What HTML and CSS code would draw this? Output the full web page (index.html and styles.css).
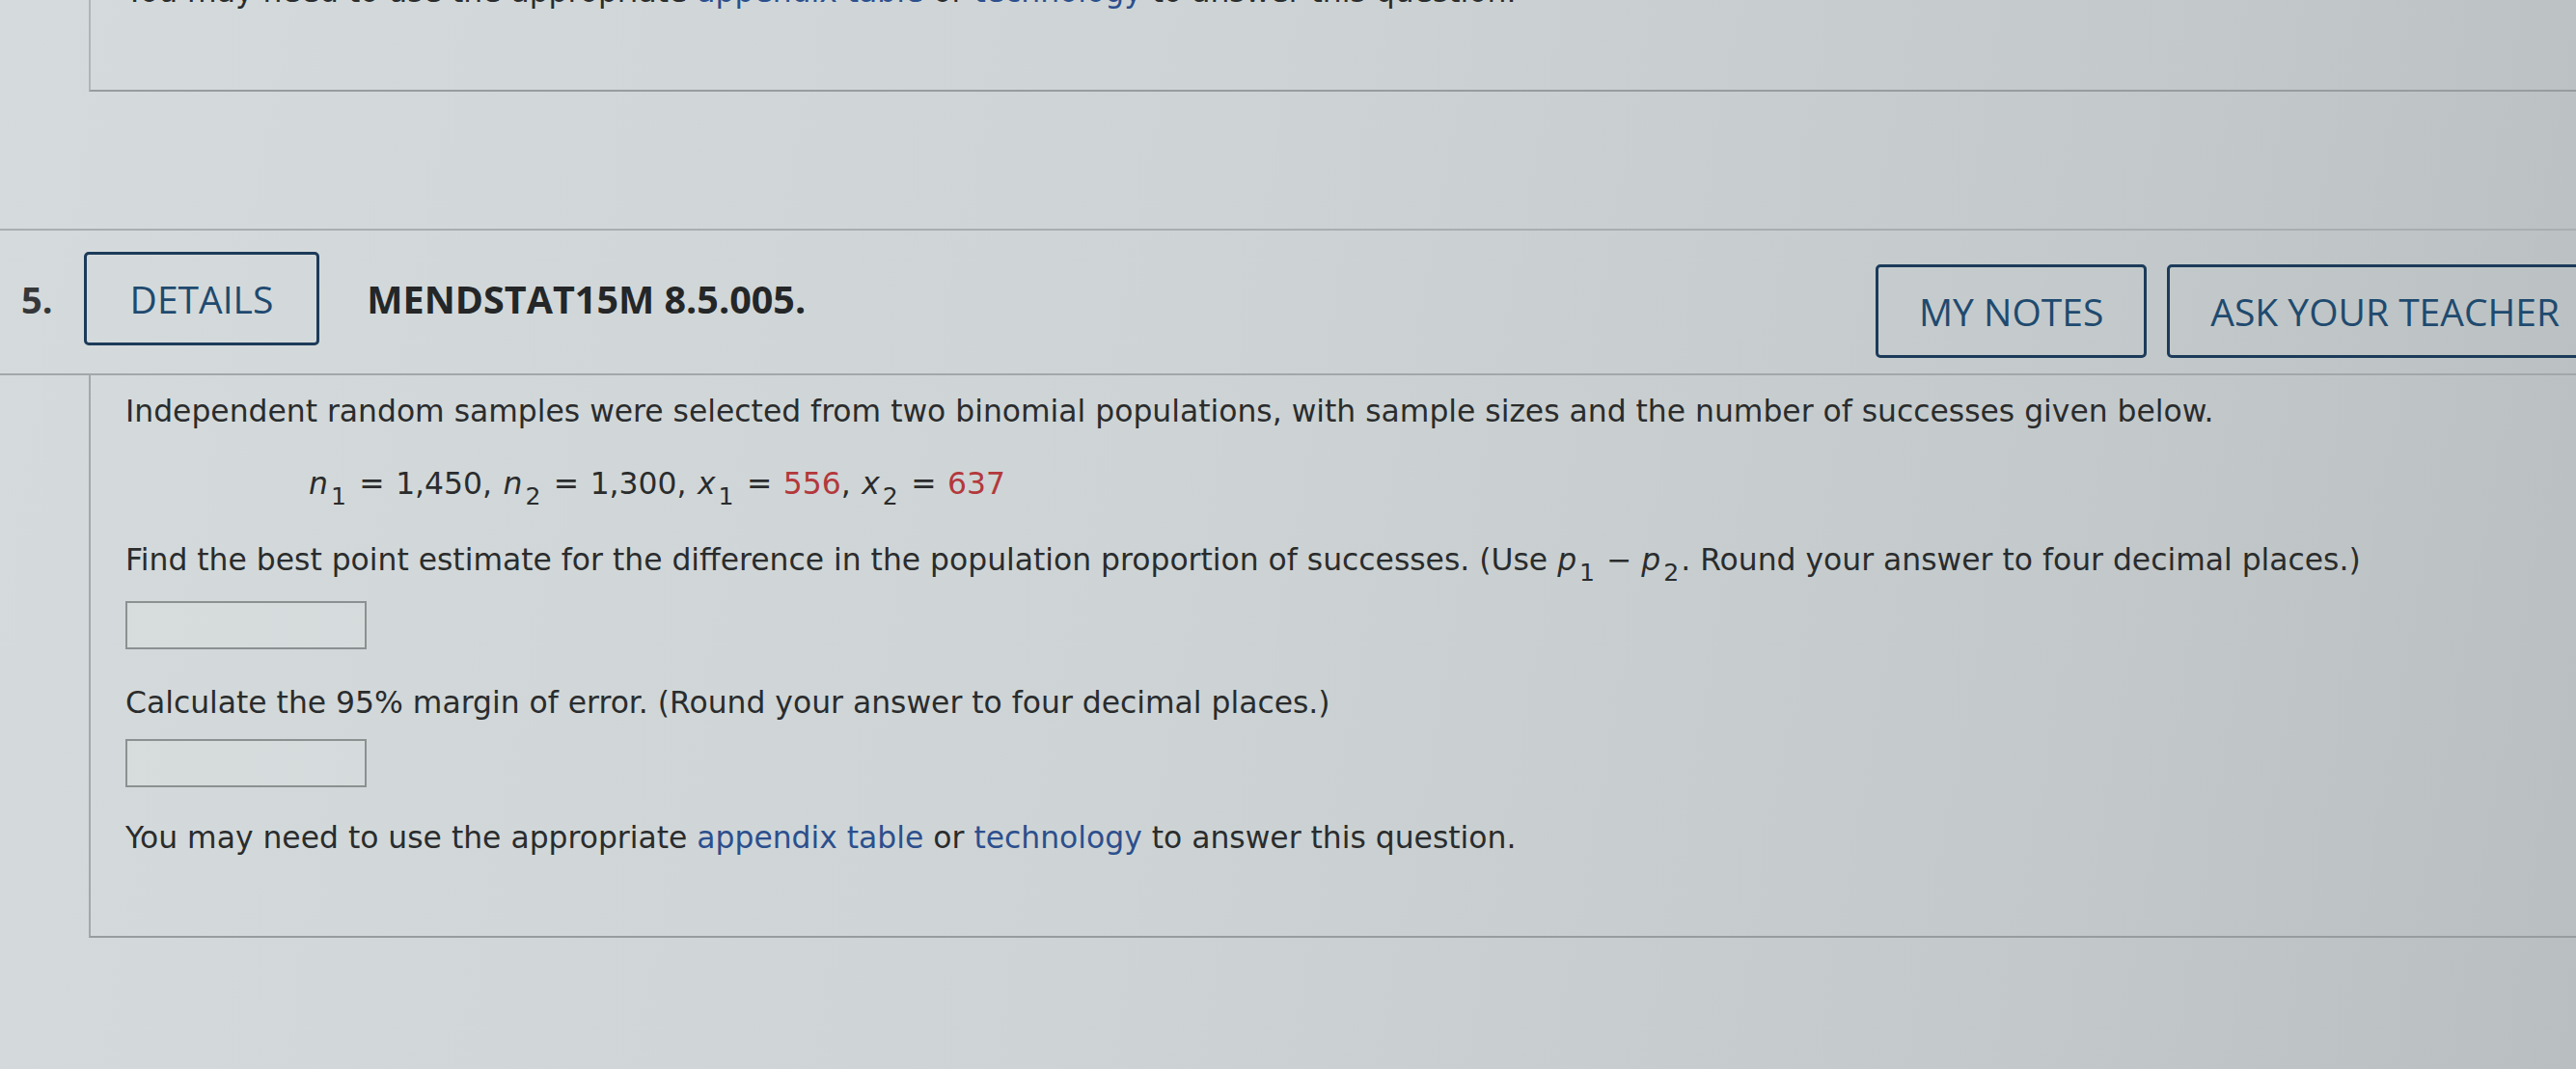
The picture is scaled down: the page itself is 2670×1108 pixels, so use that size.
FILE: index.html
```html
<!DOCTYPE html>
<html>
<head>
    <title>Assignment</title>
    <meta charset="utf-8" />
    <link rel="stylesheet" href="styles.css">
</head>
<body>
    <div class="page">

        <div class="qbody qbody-prev">
            <p class="qline">You may need to use the appropriate <a class="ref-link" href="#">appendix table</a> or <a class="ref-link" href="#">technology</a> to answer this question.</p>
        </div>

        <div class="question">
            <div class="qhead">
                <div class="qhead-left">
                    <span class="qnum">5.</span>
                    <button class="outline-button details-button">DETAILS</button>
                    <span class="qid">MENDSTAT15M 8.5.005.</span>
                </div>
                <div class="qtools">
                    <button class="outline-button">MY NOTES</button>
                    <button class="outline-button">ASK YOUR TEACHER</button>
                </div>
            </div>

            <div class="qbody">
                <p class="qline">Independent random samples were selected from two binomial populations, with sample sizes and the number of successes given below.</p>

                <p class="qline formula">
                    <i>n</i><sub>1</sub> = 1,450, <i>n</i><sub>2</sub> = 1,300, <i>x</i><sub>1</sub> = <span class="given">556</span>, <i>x</i><sub>2</sub> = <span class="given">637</span>
                </p>

                <p class="qline gap-find">Find the best point estimate for the difference in the population proportion of successes. (Use <i>p</i><sub>1</sub> &minus; <i>p</i><sub>2</sub>. Round your answer to four decimal places.)</p>
                <input class="answer-box answer-first" type="text">

                <p class="qline gap-calc">Calculate the 95% margin of error. (Round your answer to four decimal places.)</p>
                <input class="answer-box answer-second" type="text">

                <p class="qline gap-note">You may need to use the appropriate <a class="ref-link" href="#">appendix table</a> or <a class="ref-link" href="#">technology</a> to answer this question.</p>
            </div>
        </div>

    </div>
</body>
</html>
```

FILE: styles.css
```css
html, body {
    margin: 0;
    height: 100%;
    overflow: hidden;
    background: linear-gradient(100deg, #d5dbdc 0%, #ced4d5 45%, #c3c9ca 80%, #b9bfc0 100%);
    color: #2a2c2d;
    font-family: "DejaVu Sans", Verdana, sans-serif;
}

.page {
    width: 2700px;
}

/* question body: text, formula, answer boxes */
.qbody {
    margin-left: 92px;
    padding: 17px 0 82px 36px;
    border-left: 2px solid #a3a9aa;
    border-bottom: 2px solid #979d9e;
}

.qbody-prev {
    margin-top: -29px;
    padding-top: 0;
    border-left-color: #b0b6b7;
}

.qline {
    margin: 0;
    font-size: 31.4px;
    line-height: 40px;
    white-space: nowrap;
}

.qline i {
    font-style: italic;
}

.qline sub {
    font-size: 0.8em;
    line-height: 0;
    vertical-align: -0.42em;
    margin: 0 2px 0 3px;
}

.formula {
    margin: 35px 0 0 190px;
    word-spacing: 1.5px;
}

.given {
    color: #b3383b;
}

.gap-find {
    margin-top: 39px;
}

.gap-calc {
    margin-top: 35px;
}

.gap-note {
    margin-top: 32px;
}

.ref-link {
    color: #2c4f8d;
    text-decoration: none;
}

.answer-box {
    display: block;
    box-sizing: border-box;
    width: 250px;
    height: 50px;
    margin: 0;
    border: 2px solid #8b9091;
    background-color: rgba(255, 255, 255, 0.08);
}

.answer-first {
    margin-top: 23px;
}

.answer-second {
    margin-top: 18px;
}

/* question header bar */
.question {
    margin-top: 142px;
}

.qhead {
    display: flex;
    align-items: flex-start;
    padding: 22px 2px 16px 22px;
    border-top: 2px solid #a9afb0;
    border-bottom: 2px solid #a2a8a9;
    font-family: "Open Sans", "Liberation Sans", sans-serif;
}

.qhead-left {
    display: flex;
    align-items: center;
}

.qnum {
    font-size: 38px;
    font-weight: 700;
    color: #353738;
    margin-right: 32px;
}

.qid {
    font-size: 39.5px;
    font-weight: 700;
    color: #242627;
    margin-left: 49px;
}

.qtools {
    display: flex;
    gap: 21px;
    margin-left: auto;
    margin-top: 13px;
}

.outline-button {
    box-sizing: border-box;
    height: 97px;
    padding: 0 42px;
    border: 3px solid #1c3b5a;
    border-radius: 5px;
    background: transparent;
    color: #1f4a6f;
    font-family: "Open Sans", "Liberation Sans", sans-serif;
    font-size: 39px;
    cursor: pointer;
}

.details-button {
    padding: 0 45px;
}
```
